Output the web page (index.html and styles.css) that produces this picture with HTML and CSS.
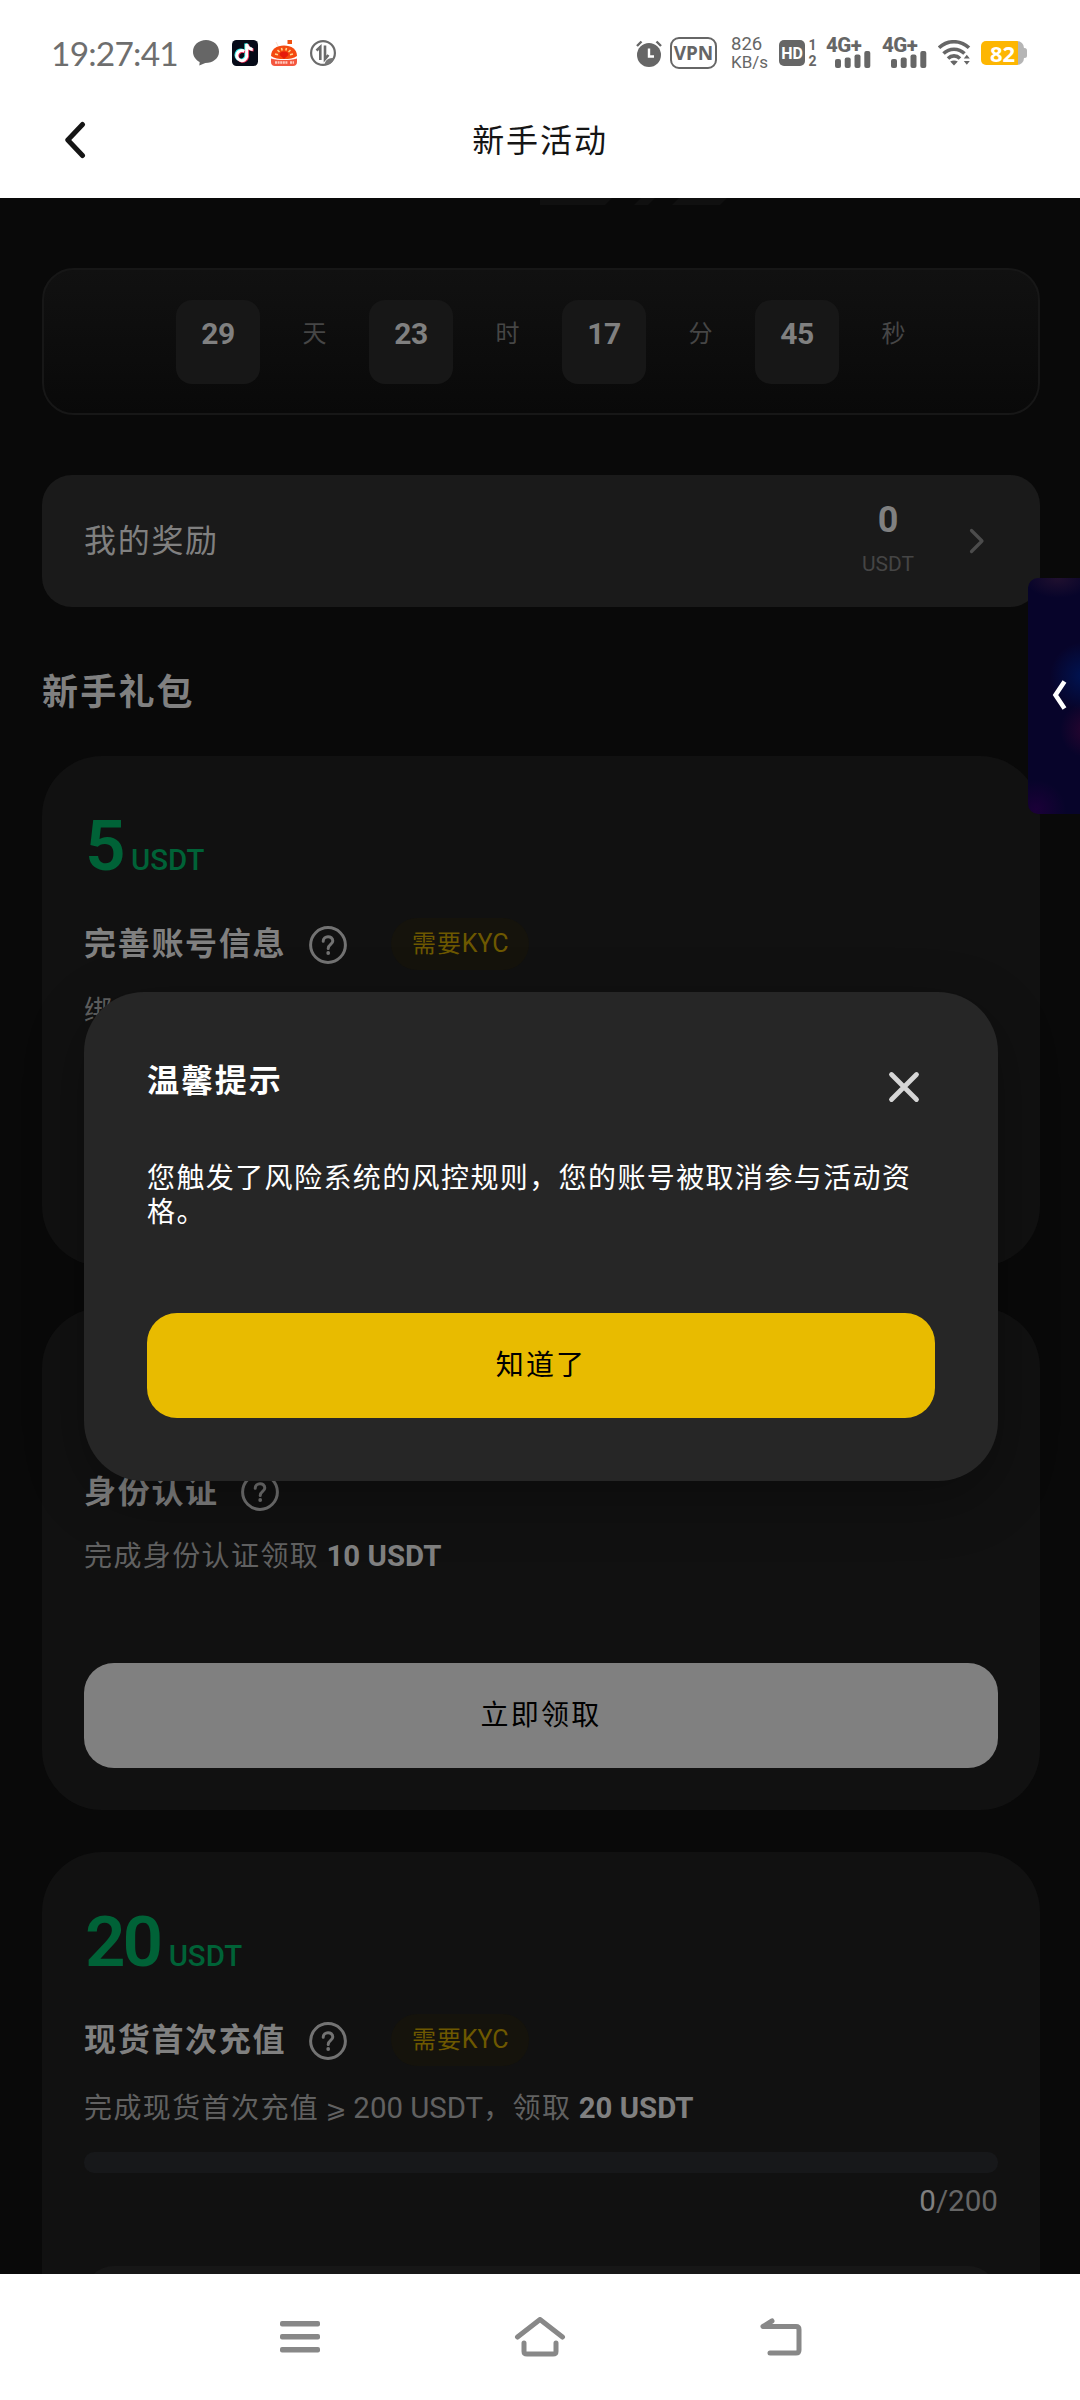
FILE: index.html
```html
<!DOCTYPE html>
<html lang="zh-CN">
<head>
<meta charset="utf-8">
<title>新手活动</title>
<link rel="stylesheet" href="styles.css">
</head>
<body>
<div class="screen">
  <header class="top">
    <div class="status">
      <div class="status-left">
        <span class="clock">19:27:41</span>
        <svg width="26" height="26" viewBox="0 0 26 26"><path d="M13 0C5.800 0 0 5 0 11.800c0 4.700 2.700 8.200 6.700 10.200L6.300 25.500l6-2.500C20 23 26 18.500 26 11.800 26 5 20.200 0 13 0z" fill="#666"/></svg>
        <svg width="26" height="26" viewBox="0 0 26 26"><rect width="26" height="26" rx="4.500" fill="#060a18"/><g fill="none" stroke-width="3"><path d="M12.300 11.300a5 5 0 1 0 2.400 5.200V4c.6 3 2.600 5.200 6 5.400" stroke="#35e5e2" transform="translate(-.9 -.6)"/><path d="M12.300 11.300a5 5 0 1 0 2.400 5.200V4c.6 3 2.600 5.200 6 5.400" stroke="#f42d58" transform="translate(.9 .6)"/><path d="M12.300 11.300a5 5 0 1 0 2.400 5.200V4c.6 3 2.600 5.200 6 5.400" stroke="#fff"/></g></svg>
        <svg width="26" height="26" viewBox="0 0 26 26"><rect x="16.500" y="0" width="4.500" height="4" fill="#f05010"/><path d="M5 2l2 4" stroke="#fbe0d0" stroke-width="1"/><path d="M0 16C0 9.500 5.500 5.500 13 5.500S26 9.500 26 16c-3 2.500-8 3-13 3S3 18.500 0 16z" fill="#f4490f"/><path d="M8.500 15a4.500 3.500 0 0 1 9 0l-4.500 4z" fill="#e51b0c"/><g stroke="#ffd68a" stroke-width="1.500"><path d="M4 14l3 .7M6.500 10l2 2M10.500 8l.7 2.500M15.500 8l-.7 2.500M19.500 10l-2 2M22 14l-3 .7"/></g><path d="M0 18.500c8 2 18 2 26 0V22c0 2.500-1.500 4-4 4H4c-2.500 0-4-1.500-4-4z" fill="#f4573f"/><path d="M4 22.500h13M19 22.500h4" stroke="#ffc9bd" stroke-width="2.500" stroke-dasharray="2 .6"/></svg>
        <svg width="26" height="26" viewBox="0 0 26 26"><circle cx="13" cy="13" r="11.900" fill="none" stroke="#6b6b6b" stroke-width="2.200"/><g fill="none" stroke="#6b6b6b" stroke-width="2.600"><path d="M10.300 20V7L6.500 10.500M15 5.500V19l3.500-4M10.300 6v14"/></g><path d="M14.500 24.500c1-5 4-6.500 9.500-6.500-1 4-4 7-9.500 6.500z" fill="#777"/></svg>
      </div>
      <div class="status-right">
        <svg class="alarm" width="26" height="27" viewBox="0 0 26 27"><circle cx="13" cy="15" r="12" fill="#666"/><path d="M1 6l4.500-4.500M25 6l-4.500-4.500" stroke="#666" stroke-width="2.400"/><path d="M13 8.500v8h5" fill="none" stroke="#fff" stroke-width="2.400"/></svg>
        <span class="vpn">VPN</span>
        <span class="speed"><span>826</span><span>KB/s</span></span>
        <span class="hd">HD</span>
        <span class="sim"><span>1</span><span>2</span></span>
        <span class="signal"><span class="net">4G+</span><svg width="36" height="17" viewBox="0 0 36 17" fill="#666"><rect x="0" y="8" width="6" height="9" rx="2"/><rect x="9.700" y="6.500" width="6" height="10.500" rx="2"/><rect x="19.500" y="3.500" width="6" height="13.500" rx="2"/><rect x="29.300" y="0" width="6" height="17" rx="2"/></svg></span>
        <span class="signal"><span class="net">4G+</span><svg width="36" height="17" viewBox="0 0 36 17" fill="#666"><rect x="0" y="8" width="6" height="9" rx="2"/><rect x="9.700" y="6.500" width="6" height="10.500" rx="2"/><rect x="19.500" y="3.500" width="6" height="13.500" rx="2"/><rect x="29.300" y="0" width="6" height="17" rx="2"/></svg></span>
        <svg class="wifi" width="33" height="26" viewBox="0 0 33 26"><g fill="none" stroke="#666" stroke-width="3.600"><path d="M1 7.800C9.500-.3 22.500-.3 31 7.800"/><path d="M5.500 13.500c6-5.700 15-5.700 21 0"/><path d="M10 18.500c3.500-3.500 8.500-3.500 12 0"/></g><path d="M12.200 21.500q3.800-2 7.600 0L16 25.500z" fill="#666"/><path d="M25.800 18.500l3-3.800 3 3.800zM25.800 21l3 3.800 3-3.800z" fill="#666"/></svg>
        <span class="battery"><span>82</span></span>
      </div>
    </div>
    <div class="navbar">
      <svg class="back" width="22" height="38" viewBox="0 0 22 38"><path d="M18.500 3.500L3.800 19l14.700 15.500" fill="none" stroke="#151515" stroke-width="5" stroke-linecap="round" stroke-linejoin="round"/></svg>
      <h1>新手活动</h1>
    </div>
  </header>

  <main class="page">
    <svg class="banner-edge" width="560" height="8" viewBox="0 0 560 8" fill="#101010"><path d="M20 0h72l-7 7H20zM121 0h14l-7 7h-14zM159 0h48l-7 7h-48z"/></svg>
    <section class="timer">
      <span class="num">29</span><span class="unit">天</span>
      <span class="num">23</span><span class="unit">时</span>
      <span class="num">17</span><span class="unit">分</span>
      <span class="num">45</span><span class="unit">秒</span>
    </section>

    <section class="rewards">
      <span class="rewards-label">我的奖励</span>
      <span class="rewards-value"><b>0</b><small>USDT</small></span>
      <svg width="16" height="26" viewBox="0 0 16 26"><path d="M2.500 2.500L13 13 2.500 23.500" fill="none" stroke="#4c4c4c" stroke-width="3.200" stroke-linecap="round" stroke-linejoin="round"/></svg>
    </section>

    <h2>新手礼包</h2>

    <div class="cards">
      <article class="card">
        <div class="amount"><b>5</b><span>USDT</span></div>
        <div class="title-row">
          <h3>完善账号信息</h3>
          <svg class="help" width="38" height="38" viewBox="0 0 38 38"><circle cx="19" cy="19" r="17.400"/><path d="M14.200 15.200c0-6 9.600-6 9.600-.2 0 3.400-4.600 3.500-4.600 7.500"/><circle class="dot" cx="19.200" cy="27" r="1.900"/></svg>
          <span class="badge">需要<i>KYC</i></span>
        </div>
        <p class="desc">绑</p>
      </article>

      <article class="card second">
        <div class="amount"></div>
        <div class="title-row">
          <h3>身份认证</h3>
          <svg class="help" width="38" height="38" viewBox="0 0 38 38"><circle cx="19" cy="19" r="17.400"/><path d="M14.200 15.200c0-6 9.600-6 9.600-.2 0 3.400-4.600 3.500-4.600 7.500"/><circle class="dot" cx="19.200" cy="27" r="1.900"/></svg>
        </div>
        <p class="desc">完成身份认证领取<b> 10 USDT</b></p>
        <button class="claim">立即领取</button>
      </article>

      <article class="card third">
        <div class="amount"><b>20</b><span>USDT</span></div>
        <div class="title-row">
          <h3>现货首次充值</h3>
          <svg class="help" width="38" height="38" viewBox="0 0 38 38"><circle cx="19" cy="19" r="17.400"/><path d="M14.200 15.200c0-6 9.600-6 9.600-.2 0 3.400-4.600 3.500-4.600 7.500"/><circle class="dot" cx="19.200" cy="27" r="1.900"/></svg>
          <span class="badge">需要<i>KYC</i></span>
        </div>
        <p class="desc">完成现货首次充值<i> <span class="gte">⩾</span> 200 USDT</i>，领取<b> 20 USDT</b></p>
        <div class="progress"></div>
        <div class="count"><span>0</span>/200</div>
        <div class="disabled"></div>
      </article>
    </div>

    <div class="side-tab"><svg width="15" height="30" viewBox="0 0 15 30"><path d="M12.500 1.500L3.500 15l9 13.500" fill="none" stroke="#fff" stroke-width="4.600"/></svg></div>

    <div class="modal">
      <div class="modal-head">
        <h4>温馨提示</h4>
        <svg width="32" height="32" viewBox="0 0 32 32"><path d="M3.500 3.500l25 25M28.500 3.500l-25 25" stroke="#d6d6d6" stroke-width="4.800" stroke-linecap="round"/></svg>
      </div>
      <p>您触发了风险系统的风控规则，您的账号被取消参与活动资格。</p>
      <button class="ok">知道了</button>
    </div>
  </main>

  <nav class="system">
    <svg width="40" height="32" viewBox="0 0 40 32" fill="#888"><rect y="0" width="40" height="5.600" rx="2"/><rect y="13" width="40" height="5.600" rx="2"/><rect y="26" width="40" height="5.600" rx="2"/></svg>
    <svg width="52" height="40" viewBox="0 0 52 40"><g fill="none" stroke="#888" stroke-width="5" stroke-linecap="round" stroke-linejoin="round"><path d="M3.500 20L26 2.500 48.500 20"/><path d="M10 26v8.500q0 2.500 3 2.500h26q3 0 3-2.500V26"/></g></svg>
    <svg width="44" height="40" viewBox="0 0 44 40"><g fill="none" stroke="#888" stroke-width="5" stroke-linecap="round" stroke-linejoin="round"><path d="M12 4L3 9.500h33q3 0 3 3V33q0 3-3 3H10"/></g><path d="M12 4L3 9.500h9z" fill="#888"/></svg>
  </nav>
</div>
</body>
</html>
```
FILE: styles.css
```css
* { box-sizing: border-box; margin: 0; padding: 0; }
body { font-family: Roboto, "Noto Sans CJK SC", sans-serif; background: #fff; }
svg { display: block; flex: none; }
i { font-style: normal; }
button { border: 0; font-family: inherit; }

.screen { width: 1080px; height: 2400px; display: flex; flex-direction: column; overflow: hidden; }

/* Status bar and title */
.top { height: 198px; background: #fff; }
.status { height: 106px; padding: 0 52px 0 51px; display: flex; justify-content: space-between; align-items: center; color: #666; }
.status-left { display: flex; align-items: center; gap: 13px; }
.clock { width: 129px; font: 400 33.500px/40px Lato, sans-serif; letter-spacing: -0.800px; white-space: nowrap; color: #6e6e6e; }
.status-right { display: flex; align-items: center; white-space: nowrap; }
.alarm { margin-right: 8px; }
.vpn { width: 47px; height: 32px; border: 2.500px solid #666; border-radius: 9px; font: 700 19px/28px "Noto Sans", sans-serif; text-align: center; margin-right: 14px; }
.speed { width: 33px; display: flex; flex-direction: column; font: 400 18.500px/18px Roboto, sans-serif; margin-right: 15px; }
.speed span + span { font-size: 17px; }
.hd { width: 26px; height: 26px; border-radius: 5px; background: #666; color: #fff; font: 700 16px/27px Roboto, sans-serif; text-align: center; }
.sim { display: flex; flex-direction: column; width: 11px; margin: 0 8px 0 2px; font: 700 14px/16px Roboto, sans-serif; text-align: center; }
.signal { width: 45px; height: 32px; margin-right: 11px; display: flex; flex-direction: column; }
.signal svg { margin-left: 9px; margin-top: -2px; }
.net { font: 800 20.500px/16px Roboto, sans-serif; letter-spacing: -0.500px; }
.wifi { margin-right: 10px; }
.battery { width: 43px; height: 24px; border-radius: 5px 7px 7px 5px; background: linear-gradient(90deg, #fdb602 37px, #b5b5b5 37px); color: #fff; font: 700 22px/24px "Noto Sans", sans-serif; text-align: center; margin-right: 4px; position: relative; }
.battery::after { content: ""; position: absolute; right: -3px; top: 7px; width: 5px; height: 10px; border-radius: 3px; background: #b5b5b5; }
.navbar { height: 92px; padding: 0 64px; display: grid; grid-template-columns: 22px 1fr 22px; align-items: start; }
.back { margin-top: 15px; }
h1 { font-size: 32px; line-height: 40px; font-weight: 400; letter-spacing: 1.900px; text-align: center; color: #151515; margin-top: 15px; }

/* Scrolled page under the dialog */
.page { height: 2076px; position: relative; overflow: hidden; background: #090909; padding: 0 40px 0 42px; color: #808080; }
.banner-edge { margin-left: 478px; margin-bottom: 62px; }
.timer { height: 147px; border: 2px solid #171717; border-radius: 32px; background: linear-gradient(#111, #090909); padding: 30px 0 0 132px; display: grid; grid-template-columns: repeat(4, 84px 109px); }
.num { height: 84px; border-radius: 16px; background: #171717; text-align: center; font-size: 30px; line-height: 68px; font-weight: 700; letter-spacing: -0.500px; }
.unit { text-align: center; font-size: 24px; line-height: 68px; color: #464646; }
.rewards { height: 132px; margin-top: 60px; border-radius: 30px; background: #1a1a1a; display: flex; align-items: center; padding: 0 55px 0 42px; }
.rewards-label { font-size: 32px; letter-spacing: 1.700px; flex: 1; padding-bottom: 6px; }
.rewards-value { display: flex; flex-direction: column; align-items: center; width: 56px; margin-right: 53px; }
.rewards-value b { font-size: 36px; line-height: 46px; }
.rewards-value small { font-size: 21px; line-height: 42px; color: #454545; }
h2 { font-size: 36px; line-height: 48px; font-weight: 700; letter-spacing: 2.200px; margin-top: 62px; }

.cards { margin-top: 39px; display: flex; flex-direction: column; gap: 42px; }
.card { height: 510px; flex: none; border-radius: 60px; background: #111; padding: 48px 42px 0; }
.amount { height: 84px; line-height: 84px; display: flex; align-items: baseline; gap: 8.500px; color: #006237; padding-left: 1px; }
.amount b { font-size: 71px; font-weight: 600; letter-spacing: -3px; }
.amount span { font-size: 29.400px; font-weight: 500; }
.title-row { height: 52px; margin-top: 30px; display: flex; align-items: center; }
h3 { font-size: 32px; font-weight: 700; letter-spacing: 1.700px; line-height: 44px; }
.help { margin-left: 23px; fill: none; stroke: #737373; stroke-width: 3px; stroke-linecap: round; margin-top: 1px; }
.help .dot { fill: #737373; stroke: none; }
.badge { margin-left: 44px; width: 138px; height: 52px; border-radius: 26px; background: #15130c; color: #6d5800; font-size: 24px; line-height: 51px; text-align: center; letter-spacing: 0.900px; }
.badge i { letter-spacing: 0; font-size: 25px; }
.desc { margin-top: 24px; font-size: 28px; line-height: 36px; height: 36px; letter-spacing: 1.400px; color: #616161; white-space: nowrap; }
.desc b, .desc i { letter-spacing: 0; font-size: 29.400px; }
.desc b { color: #808080; }
.desc .gte { font-family: "DejaVu Sans", sans-serif; font-size: 25px; line-height: 20px; margin: 0 -0.700px; }
.second { height: 502px; padding-top: 44px; }
.second .help { margin-left: 22px; margin-top: 0; }
.second .desc { margin-top: 20px; }
.claim { display: block; width: 914px; height: 105px; margin-top: 89px; border-radius: 30px; background: #808080; color: #000; font-size: 28px; letter-spacing: 2.200px; padding-bottom: 6px; }
.progress { height: 21px; margin-top: 26px; border-radius: 10px; background: #17181a; }
.count { text-align: right; font-size: 29.600px; line-height: 36px; margin-top: 10px; color: #666; }
.count span { color: #808080; }
.disabled { height: 105px; margin-top: 47px; border-radius: 30px; background: #171717; }

/* Collapsed floating promo */
.side-tab { position: absolute; right: 0; top: 380px; width: 52px; height: 236px; border-radius: 10px 0 0 10px; padding: 102px 0 0 24px; background: radial-gradient(circle at 56px 98px, #001453, transparent 34px), radial-gradient(circle at 60px 152px, #2a0530, transparent 28px), radial-gradient(34px 20px at 30px 0, #20102f, transparent), radial-gradient(circle at 8px 232px, #1b0038, transparent 30px), #07042a; }

/* Dialog */
.modal { position: absolute; left: 84px; top: 794px; width: 914px; height: 489px; border-radius: 60px; background: #262626; padding: 64px 63px 0; color: #fff; box-shadow: 0 18px 60px rgba(0, 0, 0, 0.3); }
.modal-head { display: flex; justify-content: space-between; height: 52px; padding-right: 15px; }
.modal-head svg { margin-top: 15px; }
h4 { font-size: 32px; line-height: 51px; letter-spacing: 1.900px; }
.modal p { font-size: 28px; line-height: 34px; letter-spacing: 1.400px; margin-top: 54px; height: 68px; }
.ok { display: block; width: 788px; height: 105px; margin-top: 83px; border-radius: 30px; background: #e8bb00; color: #000; font-size: 28px; letter-spacing: 2.200px; padding-bottom: 6px; }

/* System navigation */
.system { height: 126px; background: #fff; display: flex; justify-content: center; align-items: center; gap: 194px; padding-left: 4px; }
```
